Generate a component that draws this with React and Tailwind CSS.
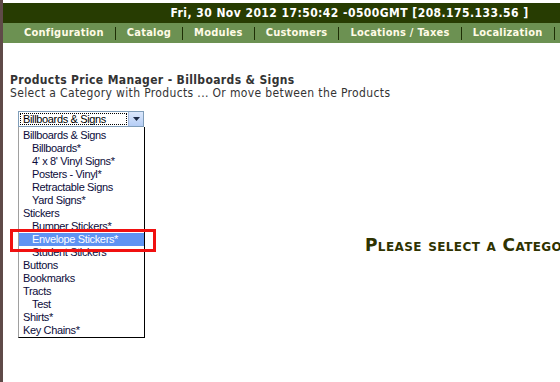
import { useState } from 'react';

const navItems = ['Configuration', 'Catalog', 'Modules', 'Customers', 'Locations / Taxes', 'Localization'];

// [label, indented]
const options = [
    ['Billboards & Signs', false],
    ['Billboards*', true],
    ["4' x 8' Vinyl Signs*", true],
    ['Posters - Vinyl*', true],
    ['Retractable Signs', true],
    ['Yard Signs*', true],
    ['Stickers', false],
    ['Bumper Stickers*', true],
    ['Envelope Stickers*', true],
    ['Student Stickers', true],
    ['Buttons', false],
    ['Bookmarks', false],
    ['Tracts', false],
    ['Test', true],
    ['Shirts*', false],
    ['Key Chains*', false],
];

const tahoma = { fontFamily: '"DejaVu Sans Condensed", "DejaVu Sans", sans-serif' };
const winFont = { fontFamily: '"Liberation Sans", Arial, sans-serif' };

const App = () => {
    const [selected] = useState(8);

    return (
        <div className="flex w-[560px] h-[382px] bg-white overflow-hidden">
            {/* left frame edge */}
            <div className="w-[3px] shrink-0 bg-[#5f4a48]" />

            <div className="flex-1 flex flex-col pt-[3px]" style={tahoma}>
                {/* status bar */}
                <div className="h-[20px] bg-[#273c02] flex items-center justify-end pr-[37px] text-white font-bold text-[12px] tracking-[0.45px]">
                    Fri, 30 Nov 2012 17:50:42 -0500GMT [208.175.133.56 ]
                </div>

                {/* nav */}
                <div className="h-[20px] bg-[#6c9152] flex items-center pl-[21px] text-[#fffbe6] font-bold text-[11px] tracking-[0.25px] whitespace-nowrap">
                    {navItems.map((n) => (
                        <div key={n} className="flex items-center">
                            <span>{n}</span>
                            <span className="mx-[11px] w-px h-[13px] bg-[#1e2e05]" />
                        </div>
                    ))}
                </div>

                {/* page body */}
                <div className="relative flex-1 pl-[7px] pt-[31px] text-[#333] tracking-[0.36px]">
                    <div className="font-bold text-[12px] leading-[13px]">Products Price Manager - Billboards &amp; Signs</div>
                    <div className="text-[12px] leading-[12px]">Select a Category with Products ... Or move between the Products</div>

                    {/* select */}
                    <div className="relative mt-[12px] ml-[8px] w-[126px] tracking-[-0.35px]" style={winFont}>
                        <div className="h-[16px] border border-[#7f9db9] flex bg-white">
                            <div className="flex-1 m-px border border-dotted border-black flex items-center pl-[2px] text-[11px] text-black leading-none">
                                Billboards &amp; Signs
                            </div>
                            <div className="w-[15px] bg-gradient-to-b from-[#dce8fc] to-[#b5cdf5] border-l border-[#9fb6dc] flex items-center justify-center">
                                <svg width="7" height="4" viewBox="0 0 7 4">
                                    <path d="M0 0h7L3.5 4z" fill="#1c2a45" />
                                </svg>
                            </div>
                        </div>

                        {/* open list */}
                        <div className="absolute left-0 top-[16px] w-[127px] h-[211px] bg-white border-l border-l-[#a0a0a0] border-r border-b border-black pt-[2px] z-10">
                            {options.map(([label, indent], i) => (
                                <div
                                    key={label}
                                    className={`h-[13px] text-[11px] leading-[13px] whitespace-nowrap ${indent ? 'pl-[13px]' : 'pl-[4px]'} ${
                                        i === selected ? 'bg-[#5f93f2] text-white' : 'text-[#0b0b3a]'
                                    }`}
                                >
                                    {label}
                                </div>
                            ))}
                        </div>

                        {/* red highlight box */}
                        <div className="absolute left-[-8px] top-[118px] w-[146px] h-[23px] border-[3px] border-[#f01010] z-20" />
                    </div>

                    {/* right message */}
                    <div
                        className="absolute left-[362px] top-[190px] font-bold text-[17px] tracking-[0.4px] text-[#2f3300] whitespace-nowrap [font-variant:small-caps]"
                        style={{ fontFamily: '"DejaVu Sans", sans-serif' }}
                    >
                        Please select a Category
                    </div>
                </div>
            </div>
        </div>
    );
};

export default App;
